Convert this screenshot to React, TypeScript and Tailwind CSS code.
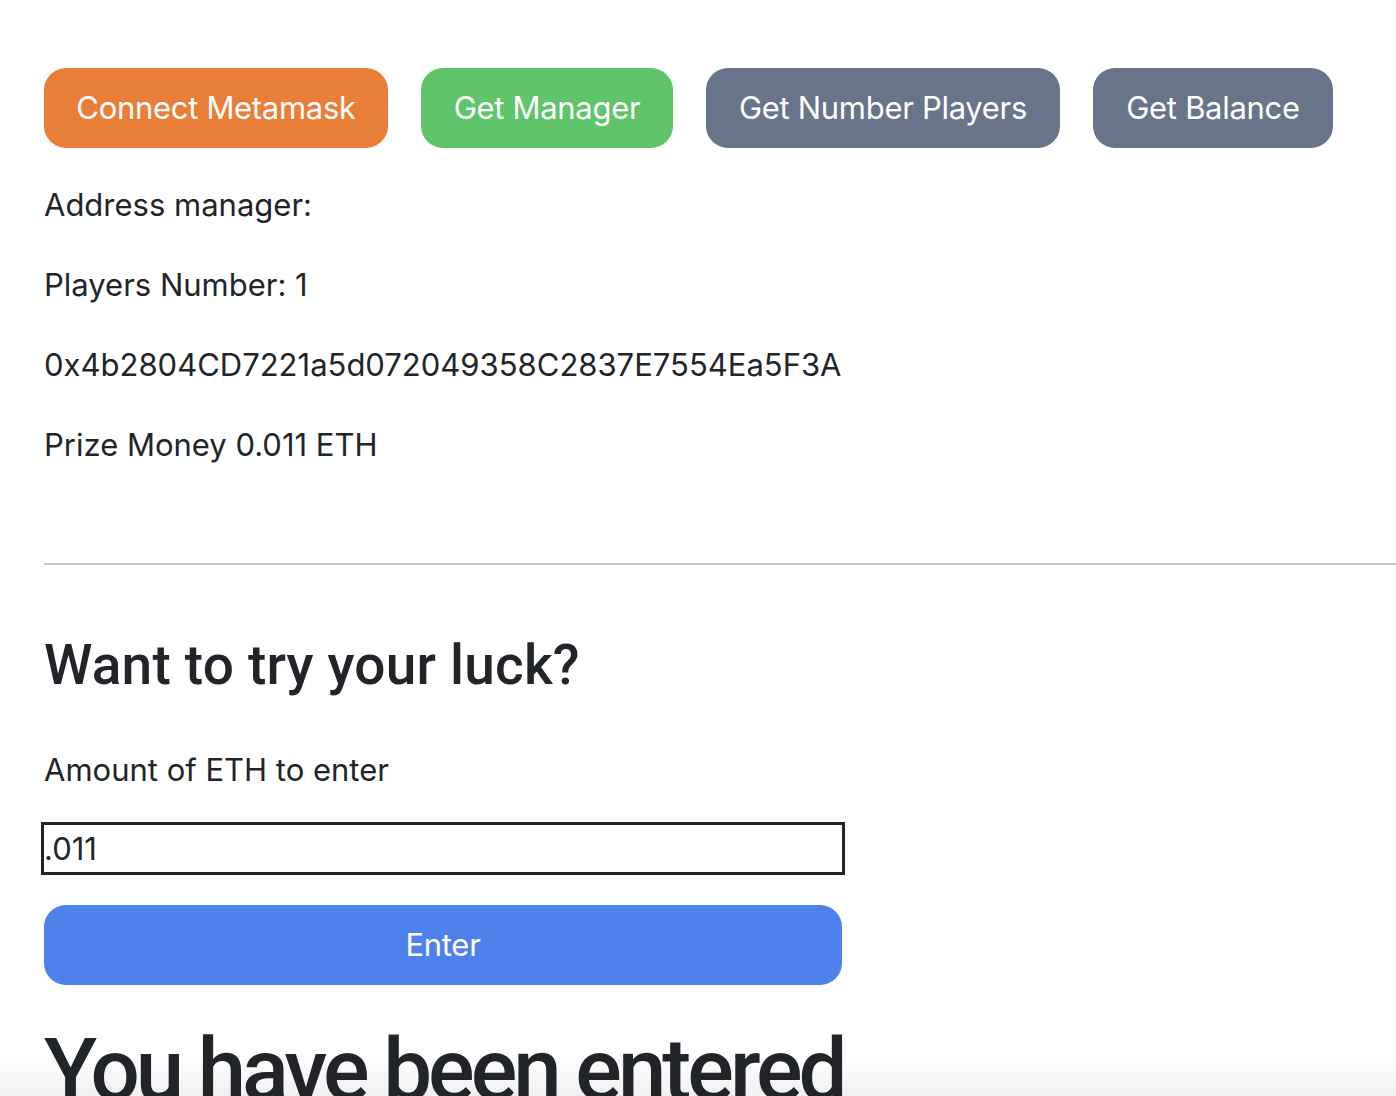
import React from "react";

export default function App() {
  return (
    <div
      className="relative min-h-[1096px] w-full overflow-hidden bg-white text-[#212529]"
      style={{ fontFamily: "Inter, 'Noto Sans', sans-serif" }}
    >
      <div className="pointer-events-none absolute bottom-0 left-0 z-0 h-[70px] w-full bg-gradient-to-b from-white to-[#e6e6e6]" />
      <div className="relative z-10 pl-[44px] pt-[68px]">
        <div className="flex gap-[33px]">
          <button className="h-[80px] w-[344px] rounded-[22px] bg-[#e97e39] text-[31px] tracking-[-0.3px] text-white">
            Connect Metamask
          </button>
          <button className="h-[80px] w-[252px] rounded-[22px] bg-[#5fc46a] text-[31px] tracking-[-0.3px] text-white">
            Get Manager
          </button>
          <button className="h-[80px] w-[354px] rounded-[22px] bg-[#687489] text-[31px] tracking-[-0.3px] text-white">
            Get Number Players
          </button>
          <button className="h-[80px] w-[240px] rounded-[22px] bg-[#687489] text-[31px] tracking-[-0.3px] text-white">
            Get Balance
          </button>
        </div>
        <div className="mt-[37px] flex flex-col gap-[40px] text-[31px] leading-[40px]">
          <p>Address manager:</p>
          <p>Players Number: 1</p>
          <p>0x4b2804CD7221a5d072049358C2837E7554Ea5F3A</p>
          <p>Prize Money 0.011 ETH</p>
        </div>
        <hr className="mt-[98px] border-0 border-t-2 border-[#c6c6c6]" />
        <h2
          className="mt-[62px] text-[55px] font-medium leading-[76px] tracking-[0.2px]"
          style={{ fontFamily: "Roboto, Inter, sans-serif" }}
        >
          Want to try your luck?
        </h2>
        <p className="mt-[47px] text-[31px] leading-[40px]">Amount of ETH to enter</p>
        <input
          defaultValue=".011"
          className="mt-[32px] ml-[-3px] block h-[53px] w-[804px] border-[3px] border-[#212529] bg-white px-0 text-[31px] outline-none"
        />
        <button className="mt-[30px] block h-[80px] w-[798px] rounded-[22px] bg-[#4e81ec] text-[31px] tracking-[-0.3px] text-white">
          Enter
        </button>
        <h1
          className="mt-[30px] whitespace-nowrap text-[87px] font-medium leading-[110px] tracking-[-4px]"
          style={{ fontFamily: "Roboto, Inter, sans-serif" }}
        >
          You have been entered
        </h1>
      </div>
    </div>
  );
}
